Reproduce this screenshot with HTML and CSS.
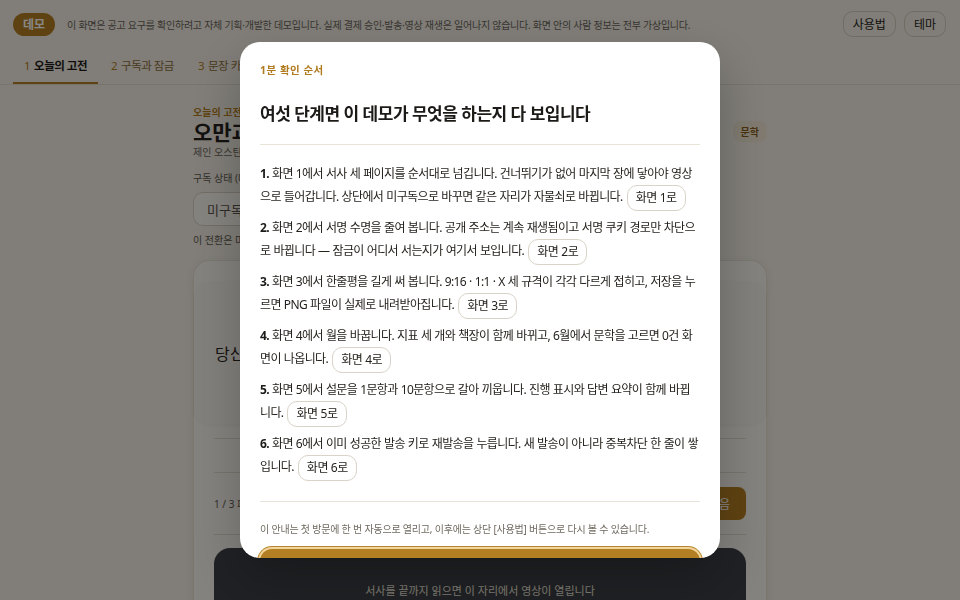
FILE: index.html
```html
<!DOCTYPE html>
<html lang="ko">
<head>
<meta charset="utf-8">
<title>오늘의 고전 — 데모</title>
<link rel="stylesheet" href="styles.css">
</head>
<body>
<div class="page">
  <header class="topbar">
    <span class="badge">데모</span>
    <p class="notice">이 화면은 공고 요구를 확인하려고 자체 기획·개발한 데모입니다. 실제 결제 승인·발송·영상 재생은 일어나지 않습니다. 화면 안의 사람 정보는 전부 가상입니다.</p>
    <div class="top-actions">
      <button class="ghost">사용법</button>
      <button class="ghost">테마</button>
    </div>
  </header>
  <nav class="tabs">
    <a class="tab active"><span class="num">1</span>오늘의 고전</a>
    <a class="tab"><span class="num">2</span>구독과 잠금</a>
    <a class="tab"><span class="num">3</span>문장 카드</a>
    <a class="tab"><span class="num">4</span>월간 리포트</a>
    <a class="tab"><span class="num">5</span>설문</a>
    <a class="tab"><span class="num">6</span>발송 기록</a>
  </nav>
  <main class="main">
    <div class="hero">
      <div>
        <p class="kicker">오늘의 고전</p>
        <h1 class="title">오만과 편견</h1>
        <p class="meta">제인 오스틴 · 1813 · 영국 소설</p>
      </div>
      <span class="tag">문학</span>
    </div>
    <p class="label">구독 상태 (데모 전환)</p>
    <div class="seg">
      <button class="seg-btn">미구독</button>
      <button class="seg-btn on">구독 중</button>
    </div>
    <p class="hint">이 전환은 미리보기용이며 실제 결제와 연결되지 않습니다.</p>
    <section class="card">
      <div class="story">
        <p>당신이 처음 본 사람을 판단하는 데 걸리는 시간은 얼마나 될까요.</p>
      </div>
      <div class="card-body">
        <div class="rule"></div>
        <div class="dots"><span class="dot on"></span><span class="dot"></span><span class="dot"></span></div>
        <div class="rule"></div>
        <div class="pager">
          <span class="count">1 / 3 페이지</span>
          <button class="next">다음</button>
        </div>
        <div class="rule"></div>
        <div class="video">
          <p>서사를 끝까지 읽으면 이 자리에서 영상이 열립니다</p>
        </div>
      </div>
    </section>
  </main>
</div>

<div class="overlay">
  <div class="modal" role="dialog" aria-labelledby="guide-title">
    <p class="m-eyebrow">1분 확인 순서</p>
    <h2 class="m-title" id="guide-title">여섯 단계면 이 데모가 무엇을 하는지 다 보입니다</h2>
    <div class="m-rule"></div>
    <ol class="steps">
      <li><b>1.</b> 화면 1에서 서사 세 페이지를 순서대로 넘깁니다. 건너뛰기가 없어 마지막 장에 닿아야 영상으로 들어갑니다. 상단에서 미구독으로 바꾸면 같은 자리가 자물쇠로 바뀝니다. <button class="jump">화면 1로</button></li>
      <li><b>2.</b> 화면 2에서 서명 수명을 줄여 봅니다. 공개 주소는 계속 재생됨이고 서명 쿠키 경로만 차단으로 바뀝니다 — 잠금이 어디서 서는지가 여기서 보입니다. <button class="jump">화면 2로</button></li>
      <li><b>3.</b> 화면 3에서 한줄평을 길게 써 봅니다. 9:16 · 1:1 · X 세 규격이 각각 다르게 접히고, 저장을 누르면 PNG 파일이 실제로 내려받아집니다. <button class="jump">화면 3로</button></li>
      <li><b>4.</b> 화면 4에서 월을 바꿉니다. 지표 세 개와 책장이 함께 바뀌고, 6월에서 문학을 고르면 0건 화면이 나옵니다. <button class="jump">화면 4로</button></li>
      <li><b>5.</b> 화면 5에서 설문을 1문항과 10문항으로 갈아 끼웁니다. 진행 표시와 답변 요약이 함께 바뀝니다. <button class="jump">화면 5로</button></li>
      <li><b>6.</b> 화면 6에서 이미 성공한 발송 키로 재발송을 누릅니다. 새 발송이 아니라 중복차단 한 줄이 쌓입니다. <button class="jump">화면 6로</button></li>
    </ol>
    <div class="m-rule bottom"></div>
    <p class="m-foot">이 안내는 첫 방문에 한 번 자동으로 열리고, 이후에는 상단 [사용법] 버튼으로 다시 볼 수 있습니다.</p>
    <button class="m-btn">확인했습니다</button>
  </div>
</div>
</body>
</html>
```

FILE: styles.css
```css
* { box-sizing: border-box; }
html, body { margin: 0; height: 100%; }
body {
  font-family: "Noto Sans", "Noto Sans CJK KR", sans-serif;
  background: #f3eee4;
  color: #24211c;
  overflow: hidden;
}
p { margin: 0; }
button { font-family: inherit; cursor: pointer; }

/* top bar */
.topbar {
  display: flex;
  align-items: center;
  height: 48px;
  padding: 0 14px 0 13px;
  gap: 12px;
}
.badge {
  display: inline-flex;
  align-items: center;
  height: 23px;
  padding: 0 10px;
  border-radius: 999px;
  background: #b47e22;
  color: #fff;
  font-size: 12px;
  font-weight: 700;
}
.notice {
  flex: 1;
  font-size: 10px;
  color: #6a645a;
  letter-spacing: -0.25px;
  white-space: nowrap;
}
.top-actions { display: flex; gap: 8px; }
.ghost {
  height: 26px;
  padding: 0 9px;
  border: 1px solid #d4ccbd;
  border-radius: 10px;
  background: transparent;
  font-size: 12px;
  color: #2a2620;
}

/* tabs */
.tabs {
  display: flex;
  gap: 2px;
  padding: 0 13px;
  height: 37px;
  border-bottom: 1px solid #e2dbcd;
}
.tab {
  display: flex;
  align-items: center;
  height: 36px;
  padding: 0 11px;
  font-size: 11.5px;
  letter-spacing: -0.5px;
  color: #8c6c3a;
  border-bottom: 2px solid transparent;
}
.tab .num { color: #b47e22; margin-right: 4px; font-weight: 400; }
.tab.active { color: #1f1c17; font-weight: 700; border-bottom-color: #b47e22; }

/* main */
.main { width: 574px; margin: 0 auto; padding-top: 20px; }
.hero { display: flex; justify-content: space-between; align-items: flex-start; }
.kicker { font-size: 10px; line-height: 14px; font-weight: 700; color: #b47e22; }
.title { margin: 0; font-size: 21px; line-height: 26px; font-weight: 700; }
.meta { font-size: 10px; line-height: 14px; color: #6a645a; }
.tag {
  margin-top: 16px;
  padding: 3px 8px;
  border-radius: 8px;
  background: #f1e7d4;
  color: #8a5e1a;
  font-size: 10px;
  font-weight: 700;
}
.label { margin-top: 12px; font-size: 10px; line-height: 14px; color: #5f594f; }
.seg {
  display: inline-flex;
  margin-top: 7px;
  height: 34px;
  padding: 3px;
  border: 1px solid #d7cfc0;
  border-radius: 10px;
  background: #fbf8f2;
  gap: 4px;
}
.seg-btn {
  padding: 0 10px;
  border: none;
  border-radius: 7px;
  background: transparent;
  font-size: 13px;
  color: #5a544a;
}
.seg-btn.on { background: #b47e22; color: #fff; }
.hint { margin-top: 7px; font-size: 10px; line-height: 14px; color: #5f594f; }

.card {
  margin-top: 13px;
  height: 400px;
  padding-top: 21px;
  border: 1px solid #e6dfd2;
  border-radius: 16px;
  background: #f9f6f0;
  box-shadow: 0 2px 8px rgba(60, 40, 10, 0.08);
}
.story {
  display: flex;
  align-items: center;
  height: 142px;
  padding: 0 21px;
  border-radius: 16px;
  background: #f6f2ea;
  box-shadow: 0 1px 4px rgba(60, 40, 10, 0.06);
}
.story p { font-size: 16px; color: #2a2620; white-space: nowrap; }
.card-body { padding: 14px 20px 0; }
.rule { height: 1px; background: #e2dbcd; }
.dots { height: 33px; display: flex; align-items: center; justify-content: center; gap: 6px; }
.dot { width: 6px; height: 6px; border-radius: 50%; background: #ddd5c6; }
.dot.on { background: #b47e22; }
.pager { display: flex; align-items: center; justify-content: space-between; height: 61px; }
.count { font-size: 10px; color: #5f594f; }
.next {
  height: 33px;
  padding: 0 16px;
  border: none;
  border-radius: 8px;
  background: #b47e22;
  color: #fff;
  font-size: 12px;
}
.video {
  margin-top: 13px;
  height: 200px;
  padding-top: 36px;
  border-radius: 16px;
  background: #3d3f45;
  text-align: center;
}
.video p { font-size: 11px; line-height: 14px; color: #ece6da; }

/* overlay + modal */
.overlay {
  position: fixed;
  inset: 0;
  display: flex;
  align-items: center;
  justify-content: center;
  background: rgba(0, 0, 0, 0.47);
}
.modal {
  width: 480px;
  max-height: 86vh;
  overflow: hidden;
  padding: 20px;
  border-radius: 20px;
  background: #fff;
  box-shadow: 0 20px 50px rgba(0, 0, 0, 0.25);
}
.m-eyebrow {
  font-size: 10.5px;
  line-height: 16px;
  font-weight: 700;
  letter-spacing: 0.5px;
  color: #b07a1e;
}
.m-title {
  margin: 23px 0 0;
  font-size: 17px;
  line-height: 26px;
  font-weight: 700;
  letter-spacing: -0.5px;
  color: #1c1a17;
}
.m-rule { margin-top: 17px; height: 1px; background: #e8e4da; }
.m-rule.bottom { margin-top: 20px; }
.steps { list-style: none; margin: 18px 0 0; padding: 0; }
.steps li {
  font-size: 12px;
  line-height: 22px;
  letter-spacing: -0.62px;
  word-spacing: 0.5px;
  color: #26231e;
  margin-bottom: 6px;
}
.steps li:last-child { margin-bottom: 0; }
.steps b { color: #1c1a17; }
.jump {
  display: inline-block;
  vertical-align: middle;
  height: 26px;
  margin-left: 1px;
  padding: 0 8px;
  border: 1px solid #d9d3c8;
  border-radius: 10px;
  background: #fff;
  font-size: 12px;
  line-height: 24px;
  letter-spacing: -0.4px;
  color: #24211c;
}
.m-foot {
  margin-top: 20px;
  font-size: 10px;
  line-height: 14px;
  letter-spacing: -0.2px;
  color: #6f6a60;
}
.m-btn {
  display: block;
  width: 100%;
  height: 44px;
  margin-top: 13px;
  border: none;
  border-radius: 12px;
  background: #b47e22;
  color: #fff;
  font-size: 14px;
  font-weight: 700;
  box-shadow: 0 0 0 2px #f2d59a, 0 0 0 3px #b8862e;
}
```
